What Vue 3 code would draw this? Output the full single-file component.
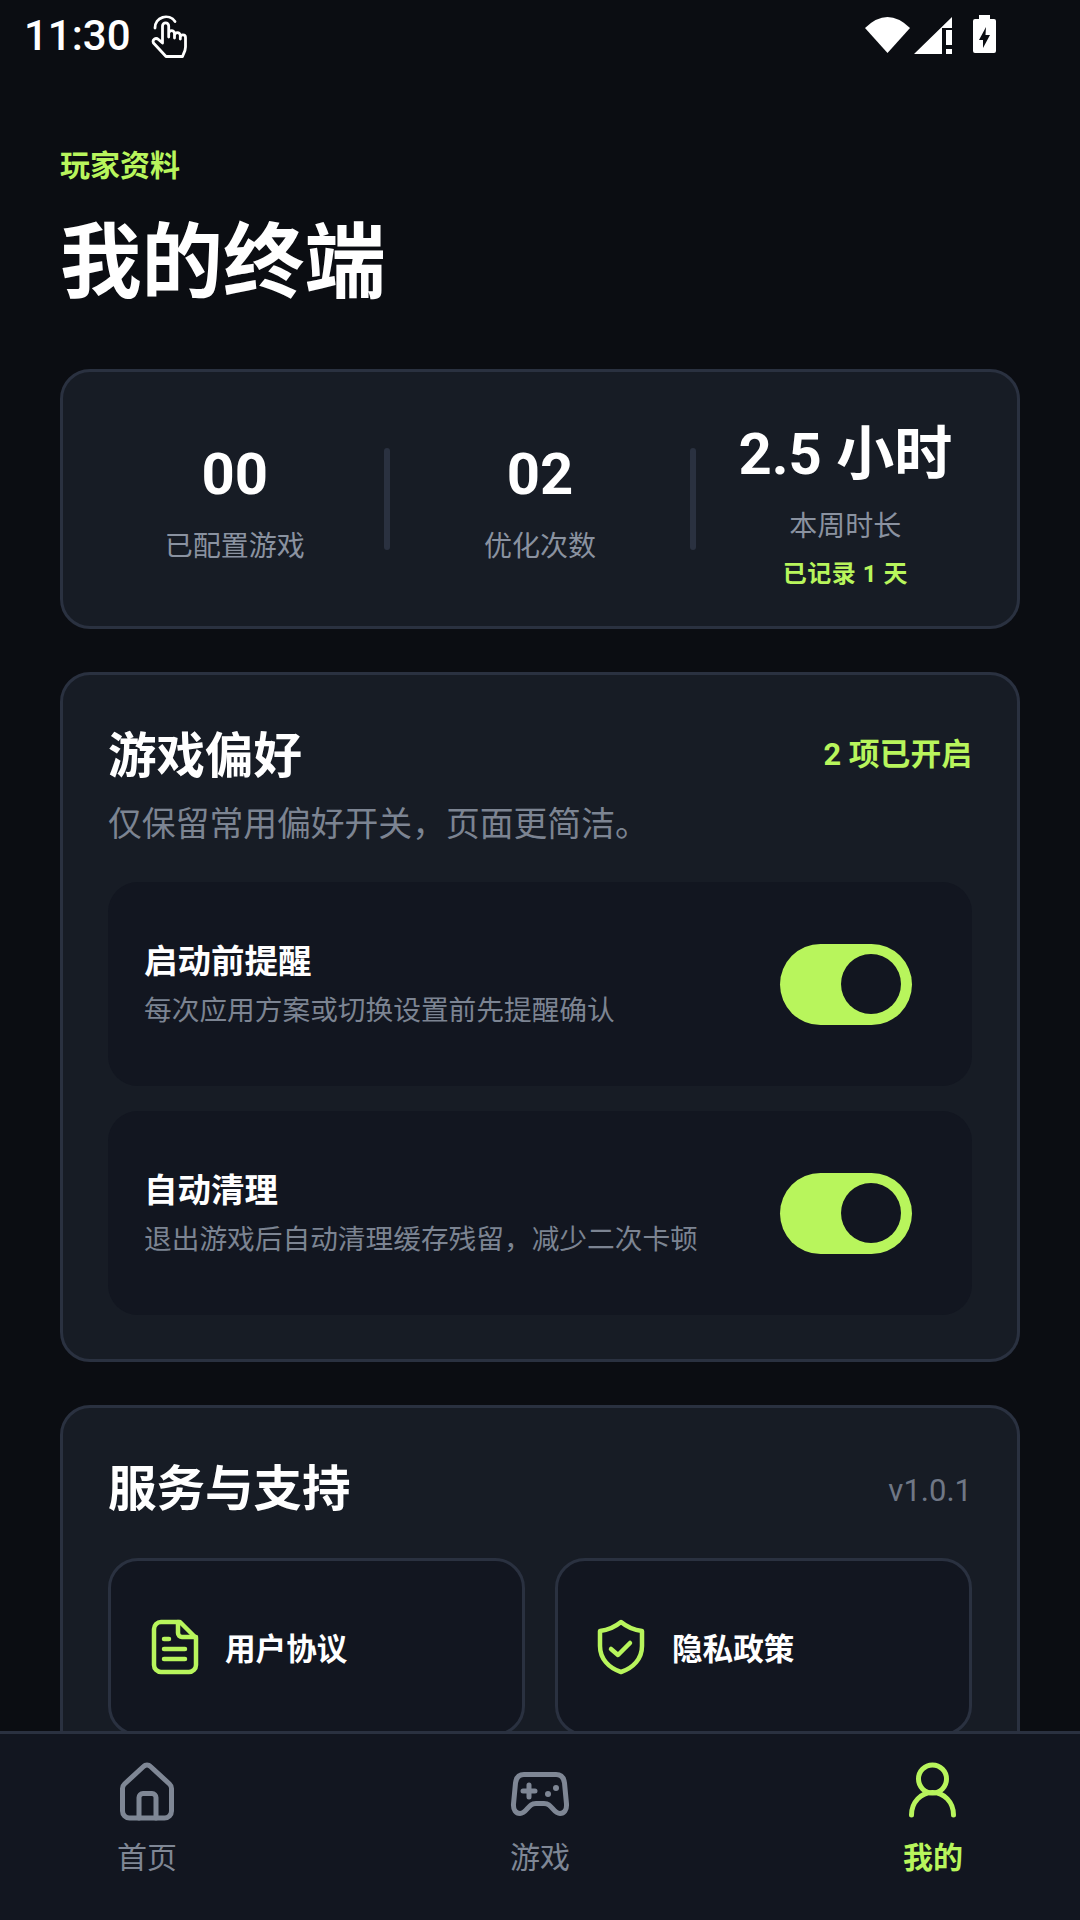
<script setup>
const stats = [
  { value: '00', label: '已配置游戏' },
  { value: '02', label: '优化次数' },
  { value: '2.5 小时', label: '本周时长', note: '已记录 1 天' }
]
const prefs = [
  { title: '启动前提醒', desc: '每次应用方案或切换设置前先提醒确认' },
  { title: '自动清理', desc: '退出游戏后自动清理缓存残留，减少二次卡顿' }
]
</script>

<template>
  <div class="page">
    <header class="status">
      <span class="time">11:30</span>
      <svg class="touch" width="36" height="46" viewBox="0 0 36 46" fill="none" stroke="#fff" stroke-width="2.800" stroke-linecap="round" stroke-linejoin="round">
        <path d="M4 15A11 11 0 0 1 24 8.500" />
        <path d="M11.500 30V13a3.100 3.100 0 0 1 6.200 0v11-3.500a2.900 2.900 0 0 1 5.800 0V25v-2.500a2.900 2.900 0 0 1 5.800 0V26v-1.500a2.600 2.600 0 0 1 5.200 0V34c0 3-1 5-2 7l-1 2.500H15L2.500 30c-1.500-3 2-6 5-3.500z" />
      </svg>
      <div class="sys">
        <svg class="wifi" width="45" height="36" viewBox="0 0 45 36"><path d="M0 11Q22.500-11 45 11L22.500 36z" fill="#fff"/></svg>
        <svg class="signal" width="38" height="37" viewBox="0 0 38 37" fill="#fff"><path d="M0 37 38 0v11H28v26z"/><rect x="32" y="13" width="6" height="15"/><rect x="32" y="32" width="6" height="5"/></svg>
        <svg class="batt" width="23" height="38" viewBox="0 0 23 38"><path fill-rule="evenodd" d="M6 0h11v4h4a2 2 0 0 1 2 2v30a2 2 0 0 1-2 2H2a2 2 0 0 1-2-2V6a2 2 0 0 1 2-2h4zM13 12 6 25h4v8l7-13h-4.500z" fill="#fff"/></svg>
      </div>
    </header>

    <main class="content">
      <section class="hero">
        <p class="eyebrow">玩家资料</p>
        <h1 class="title">我的终端</h1>
      </section>

      <section class="card stats">
        <template v-for="(s, i) in stats" :key="s.label">
          <div v-if="i" class="divider"></div>
          <div class="stat" :class="{ tall: s.note }">
            <div class="stat-value">{{ s.value }}</div>
            <div class="stat-label">{{ s.label }}</div>
            <div v-if="s.note" class="stat-note">{{ s.note }}</div>
          </div>
        </template>
      </section>

      <section class="card panel">
        <div class="head">
          <h2>游戏偏好</h2>
          <span class="head-accent">2 项已开启</span>
        </div>
        <p class="sub">仅保留常用偏好开关，页面更简洁。</p>
        <div class="rows">
          <div v-for="p in prefs" :key="p.title" class="row">
            <div class="row-text">
              <div class="row-title">{{ p.title }}</div>
              <div class="row-desc">{{ p.desc }}</div>
            </div>
            <div class="toggle"><span class="knob"></span></div>
          </div>
        </div>
      </section>

      <section class="card panel">
        <div class="head">
          <h2>服务与支持</h2>
          <span class="version">v1.0.1</span>
        </div>
        <div class="links">
          <div class="link">
            <svg class="doc" width="48" height="56" viewBox="0 0 48 56" fill="none" stroke="#b8f55c" stroke-width="4.500" stroke-linecap="round" stroke-linejoin="round">
              <path d="M10 3h19l16 16v27a7 7 0 0 1-7 7H10a7 7 0 0 1-7-7V10a7 7 0 0 1 7-7z"/>
              <path d="M27 3v11a4 4 0 0 0 4 4h14"/>
              <path d="M13 20h5M13 30h21M13 40h21"/>
            </svg>
            <span>用户协议</span>
          </div>
          <div class="link">
            <svg width="50" height="56" viewBox="0 0 50 56" fill="none" stroke="#b8f55c" stroke-width="4.500" stroke-linecap="round" stroke-linejoin="round">
              <path d="M25 3c6 5 13 8 21 9v15c0 13-9 22-21 26C13 49 4 40 4 27V12c8-1 15-4 21-9z"/>
              <path d="m15 30 7 6 12-12"/>
            </svg>
            <span>隐私政策</span>
          </div>
        </div>
      </section>
    </main>

    <nav class="nav">
      <div class="tab">
        <svg width="60" height="60" viewBox="0 0 60 60" fill="none" stroke="#7f8795" stroke-width="5" stroke-linecap="round" stroke-linejoin="round">
          <path d="M26.500 5.500a5 5 0 0 1 7 0L52.500 23a6 6 0 0 1 2 4.500V50a7 7 0 0 1-7 7h-35a7 7 0 0 1-7-7V27.500a6 6 0 0 1 2-4.500z"/>
          <path d="M22 57V36.500a4 4 0 0 1 4-4h9a4 4 0 0 1 4 4V57"/>
        </svg>
        <span>首页</span>
      </div>
      <div class="tab">
        <svg width="64" height="60" viewBox="0 -9 64 60" fill="none" stroke="#7f8795" stroke-width="5" stroke-linecap="round" stroke-linejoin="round">
          <path d="M16 4.500h32c6 0 8 4.500 8.500 8.500l2 21c.5 6-2.500 9.500-6.500 9.500-5 0-7-5.500-11-8.500-1.500-1.200-3-1.500-5-1.500h-8c-2 0-3.500.3-5 1.500-4 3-6 8.500-11 8.500-4 0-7-3.500-6.500-9.500l2-21c.5-4 2.500-8.500 8.500-8.500z"/>
          <path d="M21 15v12M15 21h12"/>
          <circle cx="40" cy="24" r="3" fill="#7f8795" stroke="none"/>
          <circle cx="48" cy="18" r="3" fill="#7f8795" stroke="none"/>
        </svg>
        <span>游戏</span>
      </div>
      <div class="tab active">
        <svg width="52" height="60" viewBox="0 -4 52 60" fill="none" stroke="#b8f55c" stroke-width="5" stroke-linecap="round">
          <circle cx="25.500" cy="14" r="14"/>
          <path d="M4.500 50C4.500 37 14 27.500 25.500 27.500S46.500 37 46.500 50"/>
        </svg>
        <span>我的</span>
      </div>
    </nav>
  </div>
</template>

<style scoped>
.page {
  width: 1080px;
  height: 1920px;
  background: #0b0d12;
  color: #fff;
  font-family: Roboto, "Noto Sans CJK SC", sans-serif;
  display: flex;
  flex-direction: column;
  overflow: hidden;
}
.status {
  height: 72px;
  flex: none;
  display: flex;
  align-items: center;
  padding: 0 24px;
}
.time {
  font-size: 42px;
  font-weight: 500;
  line-height: 72px;
}
.touch { margin-left: 20px; }
.sys {
  margin-left: auto;
  margin-right: 60px;
  margin-bottom: 4px;
  height: 38px;
  display: flex;
  align-items: flex-start;
}
.wifi { margin-top: 2px; }
.signal { margin-left: 4px; margin-top: 2px; }
.batt { margin-left: 21px; }
.content {
  flex: 1;
  min-height: 0;
  overflow: hidden;
  padding: 0 60px;
  display: flex;
  flex-direction: column;
  gap: 43px;
}
.hero {
  padding-top: 76px;
  margin-bottom: 13px;
}
.eyebrow {
  margin: 0;
  color: #b8f55c;
  font-size: 30px;
  font-weight: 700;
  line-height: 36px;
}
.title {
  margin: 29px 0 0;
  font-size: 81.500px;
  font-weight: 700;
  line-height: 100px;
}
.card {
  background: #171c25;
  border: 3px solid #2a3140;
  border-radius: 30px;
  flex: none;
  box-sizing: border-box;
}
.stats {
  height: 260px;
  display: flex;
  align-items: center;
  padding: 0 22px;
}
.stat {
  flex: 1;
  min-width: 0;
  text-align: center;
  padding-top: 6px;
}
.stat.tall { padding-top: 10px; }
.divider {
  width: 6px;
  height: 102px;
  background: #2a3140;
  border-radius: 3px;
  flex: none;
}
.stat-value {
  font-size: 58px;
  font-weight: 700;
  line-height: 68px;
}
.stat-label {
  margin-top: 21px;
  font-size: 28px;
  line-height: 36px;
  color: #8a92a0;
}
.stat-note {
  margin-top: 14px;
  font-size: 24px;
  letter-spacing: 0.5px;
  font-weight: 700;
  line-height: 30px;
  color: #b8f55c;
}
.panel { padding: 46px 45px 44px; }
.head {
  display: flex;
  justify-content: space-between;
  align-items: center;
  height: 72px;
}
.head h2 {
  margin: 0;
  font-size: 48.500px;
  font-weight: 700;
  line-height: 72px;
}
.head-accent {
  color: #b8f55c;
  font-size: 30.800px;
  font-weight: 700;
  margin-bottom: 12px;
}
.version {
  color: #6f7786;
  font-size: 31px;
}
.sub {
  margin: 9px 0 0;
  font-size: 33.800px;
  line-height: 46px;
  color: #7c8492;
}
.rows {
  margin-top: 34px;
  display: flex;
  flex-direction: column;
  gap: 25px;
}
.row {
  height: 204px;
  box-sizing: border-box;
  background: #121620;
  border-radius: 30px;
  display: flex;
  align-items: center;
  justify-content: space-between;
  padding: 0 60px 0 36px;
}
.row-text { padding-top: 2px; }
.row-title {
  font-size: 33.500px;
  font-weight: 700;
  line-height: 44px;
}
.row-desc {
  margin-top: 8px;
  font-size: 27.700px;
  line-height: 38px;
  color: #7c8492;
}
.toggle {
  width: 132px;
  height: 81px;
  border-radius: 41px;
  background: #b8f55c;
  display: flex;
  align-items: center;
  justify-content: flex-end;
  padding-right: 11px;
  box-sizing: border-box;
}
.knob {
  width: 60px;
  height: 60px;
  border-radius: 50%;
  background: #121620;
}
.links {
  margin-top: 32px;
  display: grid;
  grid-template-columns: 1fr 1fr;
  gap: 30px;
}
.link {
  height: 178px;
  box-sizing: border-box;
  background: #121620;
  border: 3px solid #2a3140;
  border-radius: 30px;
  display: flex;
  align-items: center;
  gap: 26px;
  padding-left: 38px;
  font-size: 30.600px;
  font-weight: 700;
}
.doc { margin-left: 2px; }
.nav {
  flex: none;
  height: 189px;
  box-sizing: border-box;
  background: #121620;
  border-top: 3px solid #2a3140;
  display: flex;
  justify-content: space-between;
  padding: 27px 87px 0;
}
.tab {
  width: 120px;
  display: flex;
  flex-direction: column;
  align-items: center;
  font-size: 30px;
  color: #7f8795;
}
.tab svg { margin-bottom: 17px; }
.tab span { line-height: 40px; }
.active { color: #b8f55c; font-weight: 700; }
</style>
